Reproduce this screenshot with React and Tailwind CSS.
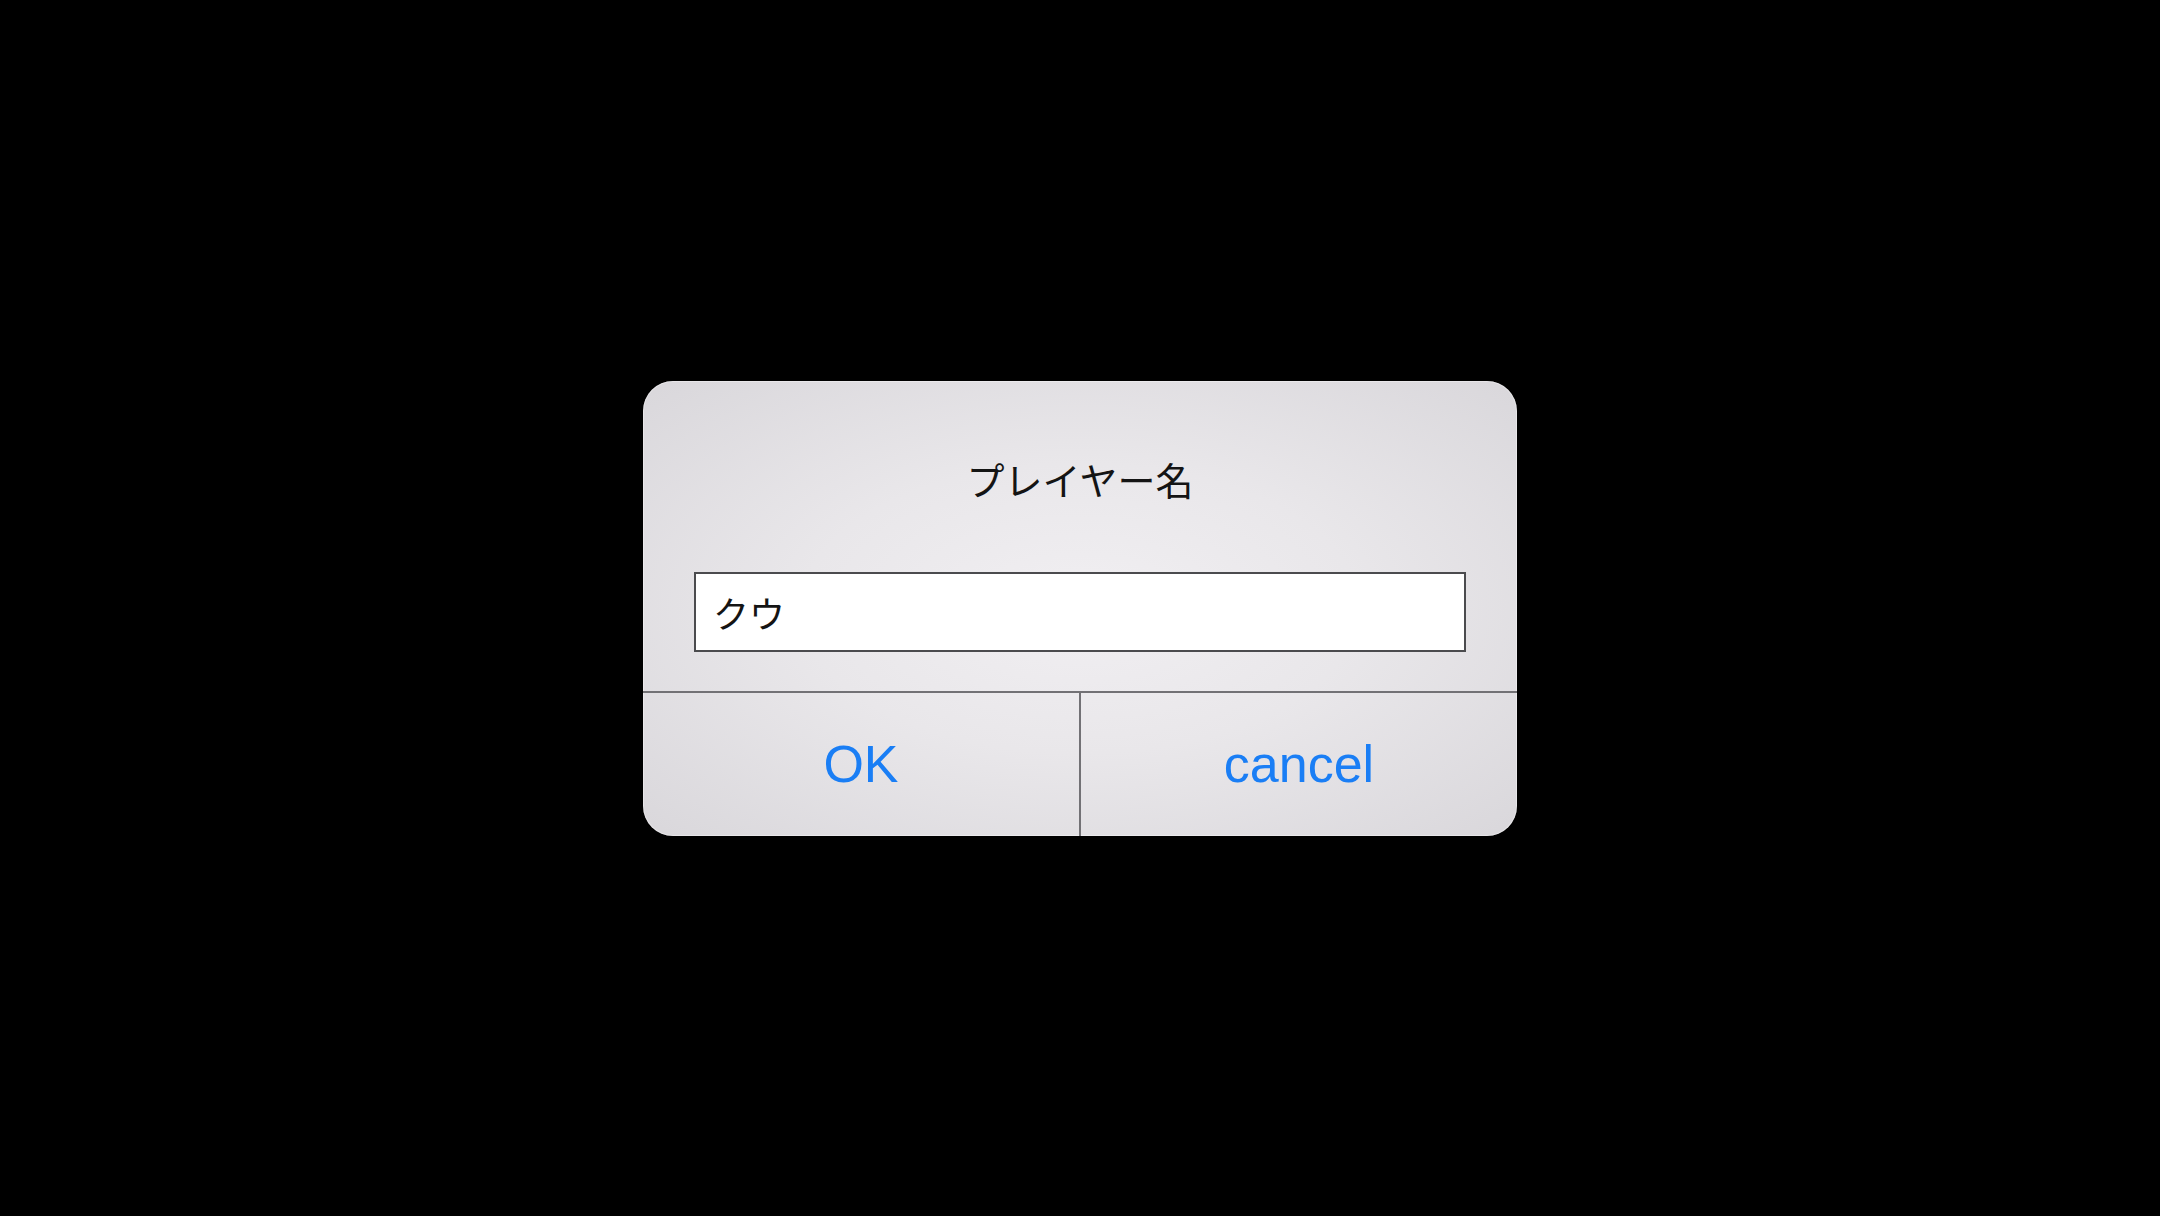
import React from "react";

const PlayerNameDialog = () => {
  return (
    <div className="w-[874px] h-[455px] rounded-[30px] overflow-hidden flex flex-col bg-[radial-gradient(ellipse_at_50%_50%,#f1eff2_0%,#e9e7ea_45%,#d9d7db_100%)] shadow-[inset_0_0_0_1px_rgba(255,255,255,0.35)]">
      <div className="h-[310px] flex flex-col items-center">
        <h2 className="pt-[78px] text-[38px] leading-[40px] text-[#141414] font-['Noto_Sans_CJK_JP',sans-serif]">
          プレイヤー名
        </h2>
        <div className="mt-[73px] w-[772px] h-[80px] bg-white border-2 border-[#4b4b4e] flex items-center pl-[17px] text-[36px] text-[#141414] font-['Noto_Sans_CJK_JP',sans-serif]">
          クウ
        </div>
      </div>
      <div className="h-[2px] bg-[#727175]" />
      <div className="flex-1 flex">
        <button className="flex-1 flex items-center justify-center text-[52px] text-[#1a7ef5] font-['Liberation_Sans',Arial,sans-serif]">
          OK
        </button>
        <div className="w-[2px] bg-[#727175]" />
        <button className="flex-1 flex items-center justify-center text-[52px] text-[#1a7ef5] font-['Liberation_Sans',Arial,sans-serif]">
          cancel
        </button>
      </div>
    </div>
  );
};

export default function App() {
  return (
    <div className="w-full h-screen bg-black flex items-center justify-center">
      <PlayerNameDialog />
    </div>
  );
}
